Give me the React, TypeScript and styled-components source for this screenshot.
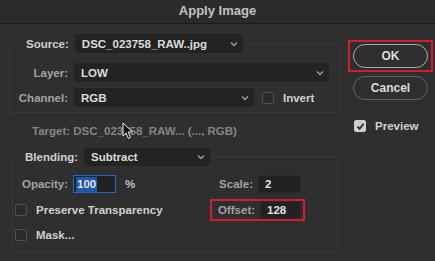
import { FC } from 'react';
import styled, { createGlobalStyle } from 'styled-components';

const GlobalStyle = createGlobalStyle`
  body {
    margin: 0;
    background: #2f2f2f;
  }
`;

const Dialog = styled.div`
  position: relative;
  width: 435px;
  height: 261px;
  overflow: hidden;
  background: #2f2f2f;
  font-family: 'Liberation Sans', Arial, sans-serif;
  font-size: 11.5px;
  font-weight: 700;
  color: #d8d8d8;
`;

const TitleBar = styled.div`
  height: 23px;
  line-height: 21px;
  text-align: center;
  font-size: 13px;
  color: #c2c2c2;
  background: #2b2b2b;
  border-bottom: 1px solid #1d1d1d;
`;

const Content = styled.div`
  display: flex;
`;

const Main = styled.div`
  width: 337px;
  padding: 10px 0 0 9px;
`;

const Group = styled.fieldset<{ $width: number; $left?: number }>`
  margin: 0 0 0 ${p => p.$left ?? 0}px;
  width: ${p => p.$width}px;
  box-sizing: border-box;
  border: 1px solid #393939;
  border-radius: 3px;
  padding: 0;
`;

const Legend = styled.legend<{ $indent: number }>`
  margin-left: ${p => p.$indent}px;
  padding: 0 4px;
  display: flex;
  align-items: center;
  gap: 6px;
`;

const Body = styled.div<{ $top: number; $bottom: number }>`
  display: flex;
  flex-direction: column;
  padding: ${p => p.$top}px 0 ${p => p.$bottom}px 0;
`;

const Row = styled.div<{ $gap?: number }>`
  display: flex;
  align-items: center;
  margin-top: ${p => p.$gap ?? 0}px;
`;

const Control = styled.div<{ $left: number; $height?: number }>`
  display: flex;
  align-items: center;
  margin-left: ${p => p.$left}px;
  height: ${p => (p.$height ? `${p.$height}px` : 'auto')};
`;

const Label = styled.span<{ $width?: number; $dim?: boolean }>`
  width: ${p => (p.$width ? `${p.$width}px` : 'auto')};
  text-align: right;
  color: ${p => (p.$dim ? '#a2a2a2' : '#d0d0d0')};
  flex-shrink: 0;
`;

const SelectBox = styled.div<{ $width: number; $height?: number }>`
  display: flex;
  align-items: center;
  justify-content: space-between;
  box-sizing: border-box;
  width: ${p => p.$width}px;
  height: ${p => p.$height ?? 19}px;
  padding: 0 5px 0 7px;
  background: #232323;
  border-radius: 3px;
  color: #dcdcdc;
`;

const Chevron = () => (
  <svg width="8" height="6" viewBox="0 0 8 6">
    <path d="M1 1.5 L4 4.5 L7 1.5" fill="none" stroke="#a0a0a0" strokeWidth="1.4" />
  </svg>
);

const Select: FC<{ width: number; height?: number; value: string }> = ({ width, height, value }) => (
  <SelectBox $width={width} $height={height}>
    <span>{value}</span>
    <Chevron />
  </SelectBox>
);

const CheckBox = styled.span<{ $checked?: boolean }>`
  display: inline-flex;
  align-items: center;
  justify-content: center;
  box-sizing: border-box;
  width: 12px;
  height: 12px;
  border-radius: 2px;
  border: 1px solid ${p => (p.$checked ? '#cfcfcf' : '#505050')};
  background: ${p => (p.$checked ? '#cfcfcf' : '#2b2b2b')};
  flex-shrink: 0;
`;

const Check: FC<{ checked?: boolean }> = ({ checked }) => (
  <CheckBox $checked={checked}>
    {checked && (
      <svg width="9" height="9" viewBox="0 0 9 9">
        <path d="M1.5 4.6 L3.6 6.8 L7.6 1.8" fill="none" stroke="#2a2a2a" strokeWidth="1.8" />
      </svg>
    )}
  </CheckBox>
);

const CheckLabel = styled.span`
  margin-left: 9px;
  color: #d0d0d0;
`;

const TargetLine = styled.div`
  height: 16px;
  line-height: 16px;
  margin: 10px 0 9px 23px;
  color: #858585;
`;

const Field = styled.div<{ $focused?: boolean }>`
  display: flex;
  align-items: center;
  box-sizing: border-box;
  width: 43px;
  height: 18px;
  padding-left: ${p => (p.$focused ? 2 : 6)}px;
  background: #222;
  border: 1px solid ${p => (p.$focused ? '#2a68c4' : '#2a2a2a')};
  color: #e2e2e2;
`;

const Selection = styled.span`
  background: #1c57a8;
  padding: 0 1px;
  line-height: 15px;
`;

const Unit = styled.span`
  margin-left: 9px;
  color: #c4c4c4;
`;

const Pair = styled.div<{ $right: number }>`
  display: flex;
  align-items: center;
  gap: 5px;
  margin-left: auto;
  margin-right: ${p => p.$right}px;
`;

const Highlight = styled.div`
  display: flex;
  align-items: center;
  gap: 5px;
  box-sizing: border-box;
  width: 95px;
  height: 22px;
  padding: 0 2px 0 6px;
  border: 2px solid #d01f2c;
  margin-left: auto;
  margin-right: 32px;
`;

const Side = styled.div`
  display: flex;
  flex-direction: column;
  padding: 16px 0 0 2px;
`;

const ButtonFrame = styled.div<{ $marked?: boolean }>`
  box-sizing: border-box;
  width: 85px;
  height: 32px;
  padding: 2px 0 0 3px;
  border: 2px solid ${p => (p.$marked ? '#d01f2c' : 'transparent')};
`;

const PillButton = styled.button<{ $primary?: boolean }>`
  box-sizing: border-box;
  width: 75px;
  height: 24px;
  border-radius: 12px;
  border: 1.5px solid ${p => (p.$primary ? '#a9a9a9' : '#656565')};
  background: #2f2f2f;
  color: #dcdcdc;
  font-family: inherit;
  font-size: 12px;
  font-weight: 700;
  padding: 0;
`;

const PreviewRow = styled.div`
  display: flex;
  align-items: center;
  margin: 16px 0 0 6px;
`;

const Cursor = styled.svg`
  position: absolute;
  left: 122px;
  top: 122px;
`;

export default function App() {
  return (
    <Dialog>
      <GlobalStyle />
      <TitleBar>Apply Image</TitleBar>
      <Content>
        <Main>
          <Group $width={332}>
            <Legend $indent={12}>
              <Label>Source:</Label>
              <Select width={168} value="DSC_023758_RAW..jpg" />
            </Legend>
            <Body $top={10} $bottom={5}>
              <Row>
                <Label $width={58} $dim>Layer:</Label>
                <Control $left={6}>
                  <Select width={255} value="LOW" />
                </Control>
              </Row>
              <Row $gap={6}>
                <Label $width={58} $dim>Channel:</Label>
                <Control $left={6}>
                  <Select width={180} value="RGB" />
                </Control>
                <Control $left={8}>
                  <Check />
                  <CheckLabel>Invert</CheckLabel>
                </Control>
              </Row>
            </Body>
          </Group>

          <TargetLine>Target: DSC_023758_RAW... (..., RGB)</TargetLine>

          <Group $width={326} $left={3}>
            <Legend $indent={8}>
              <Label>Blending:</Label>
              <Select width={126} height={18} value="Subtract" />
            </Legend>
            <Body $top={9} $bottom={7}>
              <Row>
                <Label $width={55} $dim>Opacity:</Label>
                <Control $left={5}>
                  <Field $focused>
                    <Selection>100</Selection>
                  </Field>
                </Control>
                <Unit>%</Unit>
                <Pair $right={36}>
                  <Label $dim>Scale:</Label>
                  <Field>2</Field>
                </Pair>
              </Row>
              <Row $gap={6}>
                <Control $left={2}>
                  <Check />
                  <CheckLabel>Preserve Transparency</CheckLabel>
                </Control>
                <Highlight>
                  <Label $dim>Offset:</Label>
                  <Field>128</Field>
                </Highlight>
              </Row>
              <Row $gap={5}>
                <Control $left={2} $height={18}>
                  <Check />
                  <CheckLabel>Mask...</CheckLabel>
                </Control>
              </Row>
            </Body>
          </Group>
        </Main>

        <Side>
          <ButtonFrame $marked>
            <PillButton $primary>OK</PillButton>
          </ButtonFrame>
          <ButtonFrame>
            <PillButton>Cancel</PillButton>
          </ButtonFrame>
          <PreviewRow>
            <Check checked />
            <CheckLabel>Preview</CheckLabel>
          </PreviewRow>
        </Side>
      </Content>

      <Cursor width="12" height="18" viewBox="0 0 12 18">
        <path d="M1 1 L1 14 L4 11 L6.5 16.5 L8.5 15.5 L6 10 L10.5 10 Z" fill="#111" stroke="#eee" strokeWidth="1" />
      </Cursor>
    </Dialog>
  );
}
